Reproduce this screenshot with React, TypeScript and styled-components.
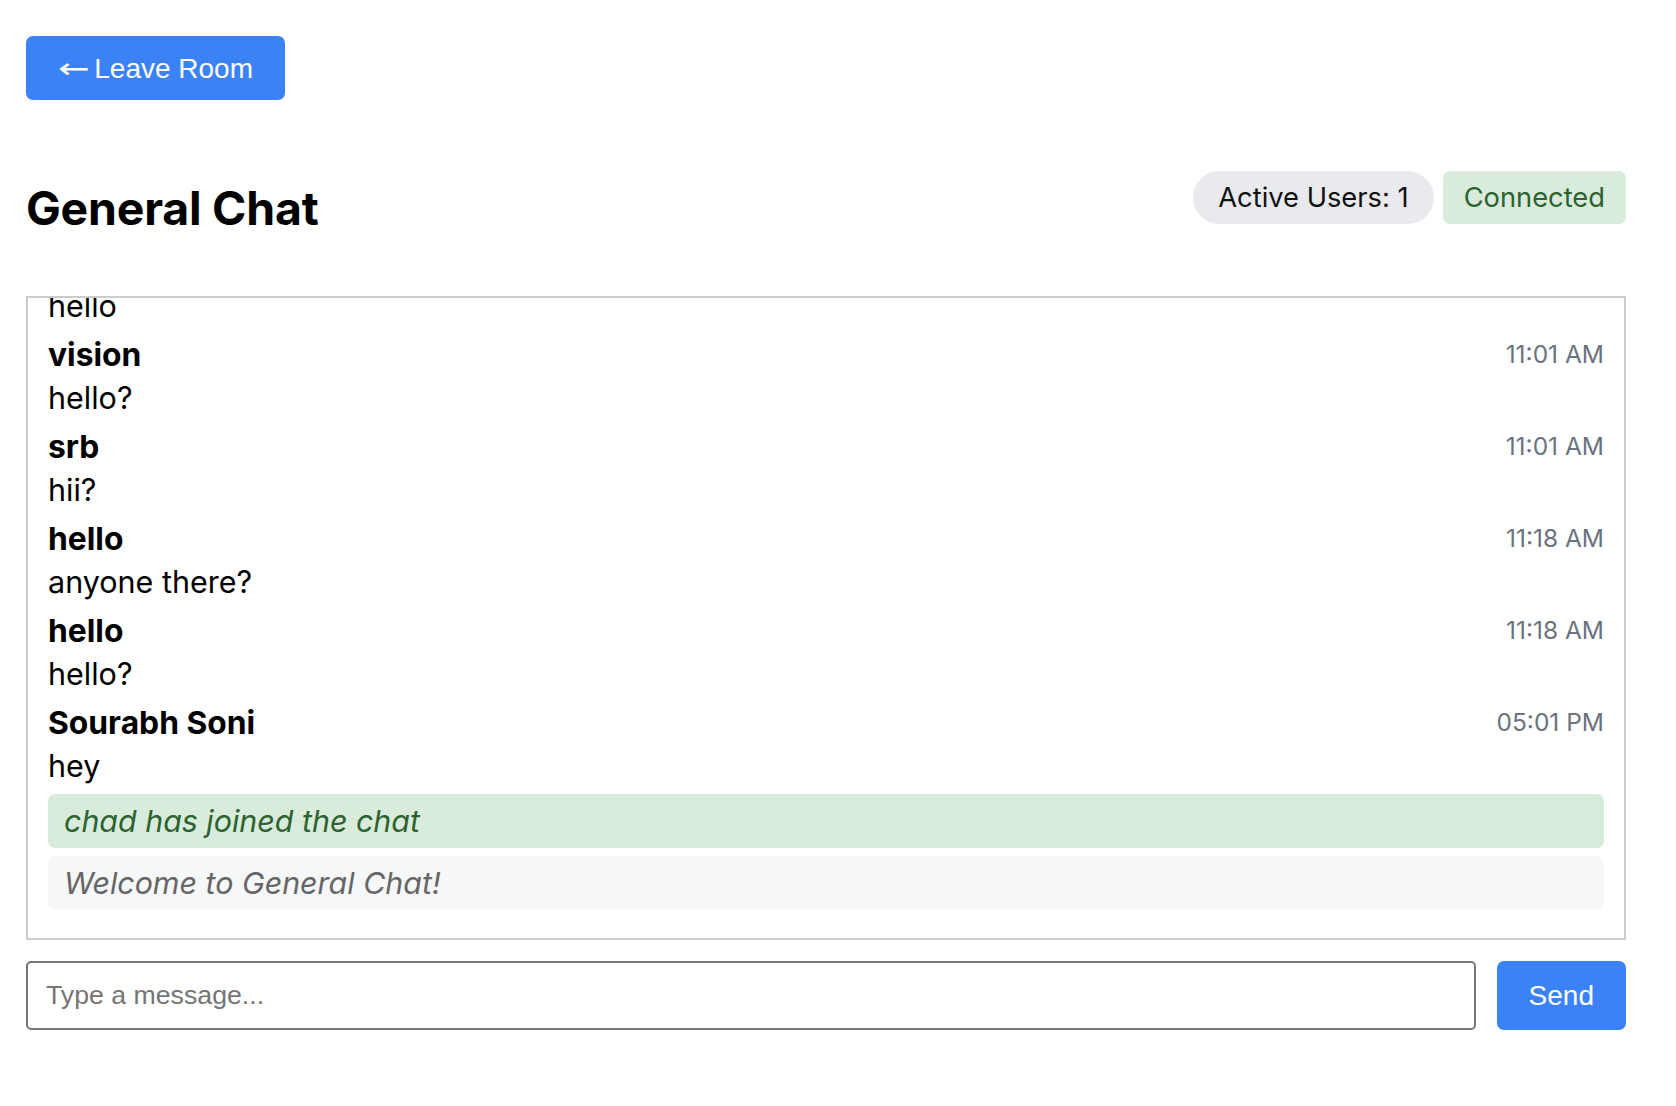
import React, { useLayoutEffect, useRef } from "react";
import styled, { createGlobalStyle } from "styled-components";

const GlobalStyle = createGlobalStyle`
  html, body { margin: 0; padding: 0; background: #ffffff; }
  body { font-family: Inter, "Noto Sans", sans-serif; color: #000; }
  * { box-sizing: border-box; }
`;

const Page = styled.div`
  width: 1600px;
  margin: 0 0 0 26px;
  padding-top: 36px;
  display: flex;
  flex-direction: column;
`;

const BlueButton = styled.button<{ $h?: number }>`
  height: ${(p) => p.$h ?? 64}px;
  padding: 0 32px;
  border: none;
  border-radius: 7px;
  background: #3b82f6;
  color: #ffffff;
  font-family: "Liberation Sans", Arial, sans-serif;
  font-size: 28px;
  cursor: pointer;
  flex: none;
`;

const Arrow = styled.span`
  display: inline-block;
  font-family: "DejaVu Sans", sans-serif;
  font-size: 28px;
  transform: scaleX(1.35);
  transform-origin: left center;
  margin-right: 5px;
`;

const TopBar = styled.div`
  display: flex;
`;

const Header = styled.div`
  display: flex;
  justify-content: space-between;
  align-items: flex-start;
  margin-top: 71px;
`;

const Title = styled.h2`
  margin: 8px 0 2px 0;
  font-size: 46.4px;
  font-weight: 700;
  line-height: 58px;
  letter-spacing: -0.2px;
`;

const Badges = styled.div`
  display: flex;
  gap: 9px;
`;

const Badge = styled.span<{ $variant: "gray" | "green" }>`
  height: 53px;
  display: flex;
  align-items: center;
  padding: 0 ${(p) => (p.$variant === "gray" ? 25 : 21)}px;
  border-radius: ${(p) => (p.$variant === "gray" ? "27px" : "7px")};
  background: ${(p) => (p.$variant === "gray" ? "#e9eaee" : "#d9ebdb")};
  color: ${(p) => (p.$variant === "gray" ? "#111111" : "#2c6331")};
  font-size: 27.3px;
`;

const ChatBox = styled.div`
  margin-top: 57px;
  height: 644px;
  border: 2px solid #cccccc;
  padding: 20px;
  overflow-y: auto;
  scrollbar-width: none;
  &::-webkit-scrollbar { display: none; }
`;

const Message = styled.div`
  margin-bottom: 4px;
`;

const MessageHead = styled.div`
  display: flex;
  justify-content: space-between;
  align-items: center;
  height: 44px;
`;

const Sender = styled.span`
  font-weight: 700;
  font-size: 31.8px;
`;

const Time = styled.span`
  font-size: 24.5px;
  color: #6b7280;
`;

const MessageText = styled.div`
  font-size: 30.5px;
  line-height: 44px;
`;

const SystemMessage = styled.div<{ $kind: "join" | "info" }>`
  margin: ${(p) => (p.$kind === "join" ? "6px" : "0")} 0 8px 0;
  padding: 0 16px;
  height: 54px;
  display: flex;
  align-items: center;
  border-radius: 7px;
  font-style: italic;
  font-size: 30.4px;
  background: ${(p) => (p.$kind === "join" ? "#d9ebdb" : "#f6f7f9")};
  color: ${(p) => (p.$kind === "join" ? "#2c6331" : "#666666")};
`;

const Composer = styled.form`
  display: flex;
  gap: 21px;
  margin-top: 21px;
`;

const Input = styled.input`
  flex: 1;
  height: 69px;
  border: 2px solid #767676;
  border-radius: 5px;
  padding: 0 18px;
  font-family: "Liberation Sans", Arial, sans-serif;
  font-size: 26.7px;
  color: #111;
  outline: none;
  &::placeholder { color: #757575; }
`;

type Msg = { user: string; text: string; time: string };

const messages: Msg[] = [
  { user: "Sourabh Soni", text: "hi", time: "10:58 AM" },
  { user: "srb", text: "hey there", time: "10:59 AM" },
  { user: "vision", text: "hello", time: "11:00 AM" },
  { user: "vision", text: "hello?", time: "11:01 AM" },
  { user: "srb", text: "hii?", time: "11:01 AM" },
  { user: "hello", text: "anyone there?", time: "11:18 AM" },
  { user: "hello", text: "hello?", time: "11:18 AM" },
  { user: "Sourabh Soni", text: "hey", time: "05:01 PM" },
];

export default function App() {
  const boxRef = useRef<HTMLDivElement>(null);

  useLayoutEffect(() => {
    if (boxRef.current) boxRef.current.scrollTop = boxRef.current.scrollHeight;
  }, []);

  return (
    <>
      <GlobalStyle />
      <Page>
        <TopBar>
          <BlueButton>
            <Arrow>←</Arrow> Leave Room
          </BlueButton>
        </TopBar>
        <Header>
          <Title>General Chat</Title>
          <Badges>
            <Badge $variant="gray">Active Users: 1</Badge>
            <Badge $variant="green">Connected</Badge>
          </Badges>
        </Header>
        <ChatBox ref={boxRef}>
          {messages.map((m, i) => (
            <Message key={i}>
              <MessageHead>
                <Sender>{m.user}</Sender>
                <Time>{m.time}</Time>
              </MessageHead>
              <MessageText>{m.text}</MessageText>
            </Message>
          ))}
          <SystemMessage $kind="join">chad has joined the chat</SystemMessage>
          <SystemMessage $kind="info">Welcome to General Chat!</SystemMessage>
        </ChatBox>
        <Composer onSubmit={(e) => e.preventDefault()}>
          <Input placeholder="Type a message..." />
          <BlueButton type="submit" $h={69}>Send</BlueButton>
        </Composer>
      </Page>
    </>
  );
}
